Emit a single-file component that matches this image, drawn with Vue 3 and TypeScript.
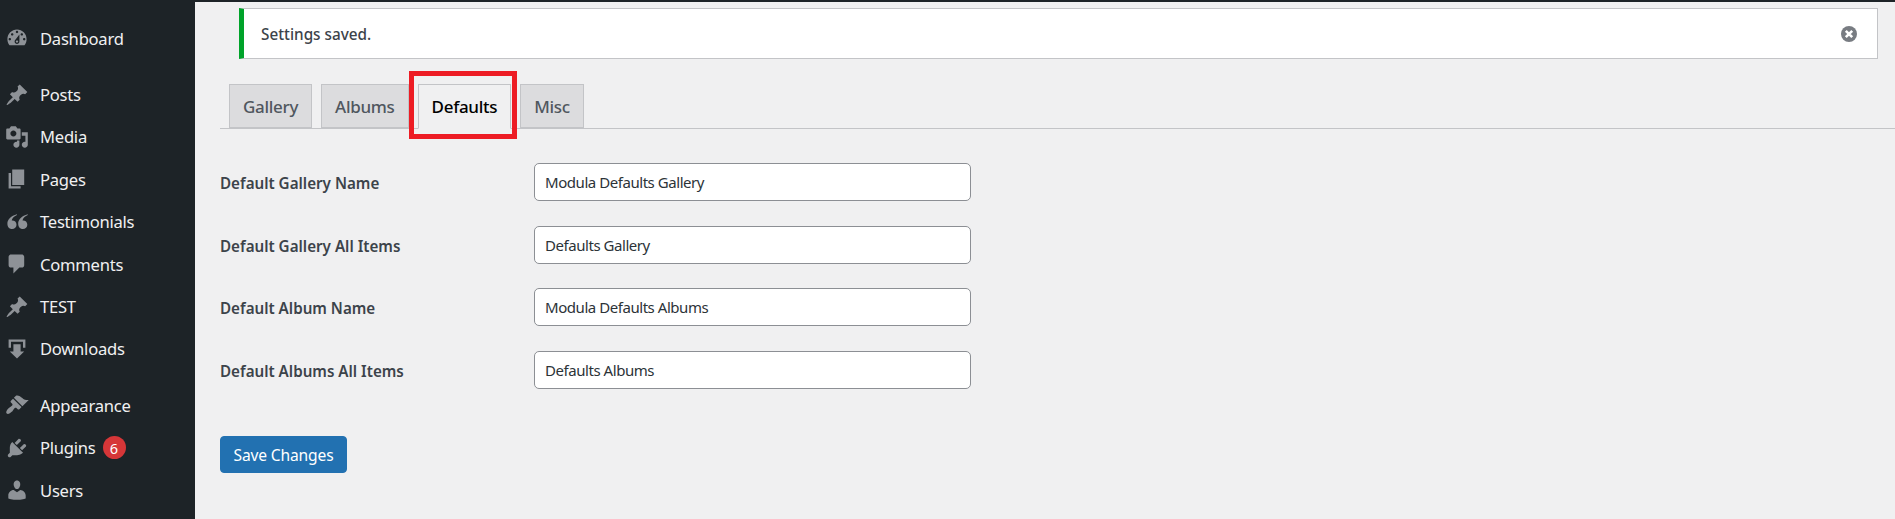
<script setup lang="ts">
interface MenuItem { label: string; d: string; gap?: boolean; badge?: string }
const pin = 'M10.44 3.02l1.82-1.82 6.36 6.35-1.83 1.82c-1.05-.68-2.48-.57-3.41.36l-.75.75c-.92.93-1.04 2.35-.35 3.41l-1.83 1.82-2.41-2.41-2.8 2.79c-.42.42-3.38 2.71-3.8 2.29s1.86-3.39 2.28-3.81l2.79-2.79L4.1 9.36l1.83-1.82c1.05.69 2.48.57 3.4-.36l.75-.75c.93-.92 1.05-2.35.36-3.41z'
const menu: MenuItem[] = [
  { label: 'Dashboard', d: 'M3.76 16h12.48c1.1-1.37 1.76-3.11 1.76-5 0-4.42-3.58-8-8-8s-8 3.58-8 8c0 1.89.66 3.63 1.76 5zM10 4c.55 0 1 .45 1 1s-.45 1-1 1-1-.45-1-1 .45-1 1-1zM6 6c.55 0 1 .45 1 1s-.45 1-1 1-1-.45-1-1 .45-1 1-1zm8 0c.55 0 1 .45 1 1s-.45 1-1 1-1-.45-1-1 .45-1 1-1zm-5.37 5.55L12 7v6c0 1.1-.9 2-2 2s-2-.9-2-2c0-.57.24-1.08.63-1.45zM4 10c.55 0 1 .45 1 1s-.45 1-1 1-1-.45-1-1 .45-1 1-1zm12 0c.55 0 1 .45 1 1s-.45 1-1 1-1-.45-1-1 .45-1 1-1zm-5 3c0-.55-.45-1-1-1s-1 .45-1 1 .45 1 1 1 1-.45 1-1z' },
  { label: 'Posts', d: pin, gap: true },
  { label: 'Media', d: 'M13 11V4c0-.55-.45-1-1-1h-1.67L9 1H5L3.67 3H2c-.55 0-1 .45-1 1v7c0 .55.45 1 1 1h10c.55 0 1-.45 1-1zM7 4.5c1.38 0 2.5 1.12 2.5 2.5S8.38 9.5 7 9.5 4.5 8.38 4.5 7 5.62 4.5 7 4.5zM14 6h5v10.5c0 1.38-1.12 2.5-2.5 2.5S14 17.88 14 16.5s1.12-2.5 2.5-2.5c.17 0 .34.02.5.05V9h-3V6zm-4 8.05V13h2v3.5c0 1.38-1.12 2.5-2.5 2.5S7 17.88 7 16.5 8.12 14 9.5 14c.17 0 .34.02.5.05z' },
  { label: 'Pages', d: 'M6 15V2h10v13H6zm-1 1h8v2H3V5h2v11z' },
  { label: 'Testimonials', d: 'M10 4.2C7.2 5.4 5.9 7 5.6 8.8 7.8 8.6 9.6 10 9.6 12.2c0 2.1-1.6 3.6-3.7 3.6C3.4 15.8 2 13.9 2 11.4 2 8 5 4.9 10 3.6zM19 4.2c-2.8 1.2-4.1 2.8-4.4 4.6 2.2-.2 4 1.2 4 3.4 0 2.1-1.6 3.6-3.7 3.6-2.5 0-3.9-1.9-3.9-4.4 0-3.4 3-6.5 8-7.8z' },
  { label: 'Comments', d: 'M5 2h9c1.1 0 2 .9 2 2v7c0 1.1-.9 2-2 2h-2l-5 5v-5H5c-1.1 0-2-.9-2-2V4c0-1.1.9-2 2-2z' },
  { label: 'TEST', d: pin },
  { label: 'Downloads', d: 'M3 2h14v7h-2V4H5v5H3zM7 6h6v6h3l-6 6-6-6h3z' },
  { label: 'Appearance', d: 'M14.48 11.06L7.41 3.99l1.5-1.5c.5-.56 2.3-.47 3.51.32 1.21.8 1.43 1.28 2.91 2.1 1.18.64 2.45 1.26 4.45.85zm-.71.71L6.7 4.7 4.93 6.47c-.39.39-.39 1.02 0 1.41l1.06 1.06c.39.39.39 1.03 0 1.42-.6.6-1.43 1.11-2.21 1.69-.35.26-.7.53-1.01.84C1.43 14.23.4 16.08 1.4 17.07c.99 1 2.84-.03 4.18-1.36.31-.31.58-.66.85-1.02.57-.78 1.08-1.61 1.69-2.21.39-.39 1.02-.39 1.41 0l1.06 1.06c.39.39 1.02.39 1.41 0z', gap: true },
  { label: 'Plugins', d: 'M13.11 4.36L9.87 7.6 8 5.73l3.24-3.24c.35-.34 1.05-.2 1.56.32.52.51.66 1.21.31 1.55zm-8 1.77l.91-1.12 9.01 9.01-1.19.84c-.71.71-2.63 1.16-3.82 1.16H6.14L4.9 17.26c-.59.59-1.54.59-2.12 0-.59-.58-.59-1.53 0-2.12l1.24-1.24v-3.88c0-1.13.4-3.19 1.09-3.89zm7.26 3.97l3.24-3.24c.34-.35 1.04-.21 1.55.31.52.51.66 1.21.31 1.55l-3.24 3.25z', badge: '6' },
  { label: 'Users', d: 'M10 9.25c-2.27 0-2.73-3.44-2.73-3.44C7 4.02 7.82 2 9.97 2c2.16 0 2.98 2.02 2.71 3.81 0 0-.41 3.44-2.68 3.44zm0 2.57L12.72 10c2.39 0 4.52 2.33 4.52 4.53v2.49s-3.65 1.13-7.24 1.13c-3.65 0-7.24-1.13-7.24-1.13v-2.49c0-2.25 1.94-4.48 4.47-4.48z' },
]
const tabs = ['Gallery', 'Albums', 'Defaults', 'Misc']
const fields = [
  { label: 'Default Gallery Name', value: 'Modula Defaults Gallery' },
  { label: 'Default Gallery All Items', value: 'Defaults Gallery' },
  { label: 'Default Album Name', value: 'Modula Defaults Albums' },
  { label: 'Default Albums All Items', value: 'Defaults Albums' },
]
</script>

<template>
  <div class="page">
    <aside class="sidebar">
      <div v-for="item in menu" :key="item.label" class="menu-item" :class="{ gap: item.gap }">
        <svg class="menu-icon" viewBox="0 0 20 20" aria-hidden="true"><path :d="item.d" fill-rule="evenodd" /></svg>
        <span>{{ item.label }}</span>
        <span v-if="item.badge" class="badge">{{ item.badge }}</span>
      </div>
    </aside>
    <main class="content">
      <div class="notice">
        <p>Settings saved.</p>
        <svg class="dismiss" viewBox="0 0 16 16" aria-hidden="true">
          <circle cx="8" cy="8" r="8" fill="#787c82" />
          <path d="M4.8 4.8l6.4 6.4M11.2 4.8l-6.4 6.4" stroke="#fff" stroke-width="2.6" />
        </svg>
      </div>
      <nav class="tabs">
        <div v-for="tab in tabs" :key="tab" class="tab" :class="{ active: tab === 'Defaults' }">
          {{ tab }}
          <span v-if="tab === 'Defaults'" class="highlight"></span>
        </div>
      </nav>
      <form class="form" @submit.prevent>
        <div v-for="f in fields" :key="f.label" class="row">
          <label class="label">{{ f.label }}</label>
          <input class="input" type="text" :value="f.value" />
        </div>
        <button class="save" type="button">Save Changes</button>
      </form>
    </main>
  </div>
</template>

<style scoped>
.page {
  display: flex;
  width: 1895px;
  height: 519px;
  overflow: hidden;
  background: #f0f0f1;
  font-family: "Noto Sans", "Open Sans", sans-serif;
  font-size: 15.6px;
  color: #3c434a;
}
.sidebar {
  width: 195px;
  flex: none;
  background: #1d2327;
  padding-top: 17px;
  box-sizing: border-box;
}
.menu-item {
  display: flex;
  align-items: center;
  height: 42.4px;
  color: #f0f0f1;
  font-size: 16.6px;
  letter-spacing: -0.25px;
  white-space: nowrap;
}
.menu-item.gap { margin-top: 14px; }
.menu-icon {
  width: 24px;
  height: 24px;
  margin-left: 5px;
  margin-right: 11px;
  fill: #8e9297;
  flex: none;
}
.badge {
  display: inline-flex;
  align-items: center;
  justify-content: center;
  width: 23px;
  height: 23px;
  margin-left: 7px;
  border-radius: 50%;
  background: #d63638;
  color: #fff;
  font-size: 14.5px;
  letter-spacing: 0;
}
.content {
  flex: 1;
  min-width: 0;
  border-top: 2px solid #1d2327;
  padding: 6px 0 0 25px;
}
.notice {
  display: flex;
  align-items: center;
  justify-content: space-between;
  height: 51px;
  box-sizing: border-box;
  margin: 0 17px 0 19px;
  background: #fff;
  border: 1px solid #c3c4c7;
  border-left: 5px solid #00a32a;
  padding: 0 20px 0 17px;
}
.notice p {
  margin: 0;
  font-size: 15.3px;
  font-weight: 500;
}
.dismiss { width: 16px; height: 16px; flex: none; }
.tabs {
  display: flex;
  gap: 9px;
  height: 44px;
  margin-top: 25px;
  padding-left: 9px;
  border-bottom: 1px solid #c3c4c7;
  box-sizing: content-box;
}
.tab {
  position: relative;
  display: flex;
  align-items: center;
  height: 44px;
  box-sizing: border-box;
  padding: 0 13px;
  background: #dcdcde;
  border: 1px solid #c3c4c7;
  color: #50575e;
  font-size: 17px;
  font-weight: 500;
  letter-spacing: -0.3px;
}
.tab.active {
  background: #f0f0f1;
  border-bottom-color: #f0f0f1;
  height: 45px;
  color: #000;
}
.highlight {
  position: absolute;
  left: -10px;
  top: -14px;
  width: 98px;
  height: 58px;
  border: 5px solid #ed1c24;
  pointer-events: none;
}
.form { padding-top: 34px; }
.row {
  display: flex;
  align-items: center;
  height: 38px;
  margin-bottom: 24.67px;
}
.label {
  width: 314px;
  flex: none;
  padding-top: 2px;
  font-size: 15.2px;
  font-weight: 600;
  color: #3c434a;
}
.input {
  width: 437px;
  height: 38px;
  box-sizing: border-box;
  padding: 0 10px;
  border: 1px solid #8c8f94;
  border-radius: 5px;
  background: #fff;
  color: #2c3338;
  font-family: inherit;
  font-size: 15px;
  letter-spacing: -0.45px;
}
.save {
  display: block;
  width: 127px;
  height: 37px;
  margin-top: 47px;
  padding: 2px 0 0;
  border: 1px solid #2271b1;
  border-radius: 4px;
  background: #2271b1;
  color: #fff;
  font-family: inherit;
  font-size: 15.6px;
  letter-spacing: -0.15px;
}
</style>
